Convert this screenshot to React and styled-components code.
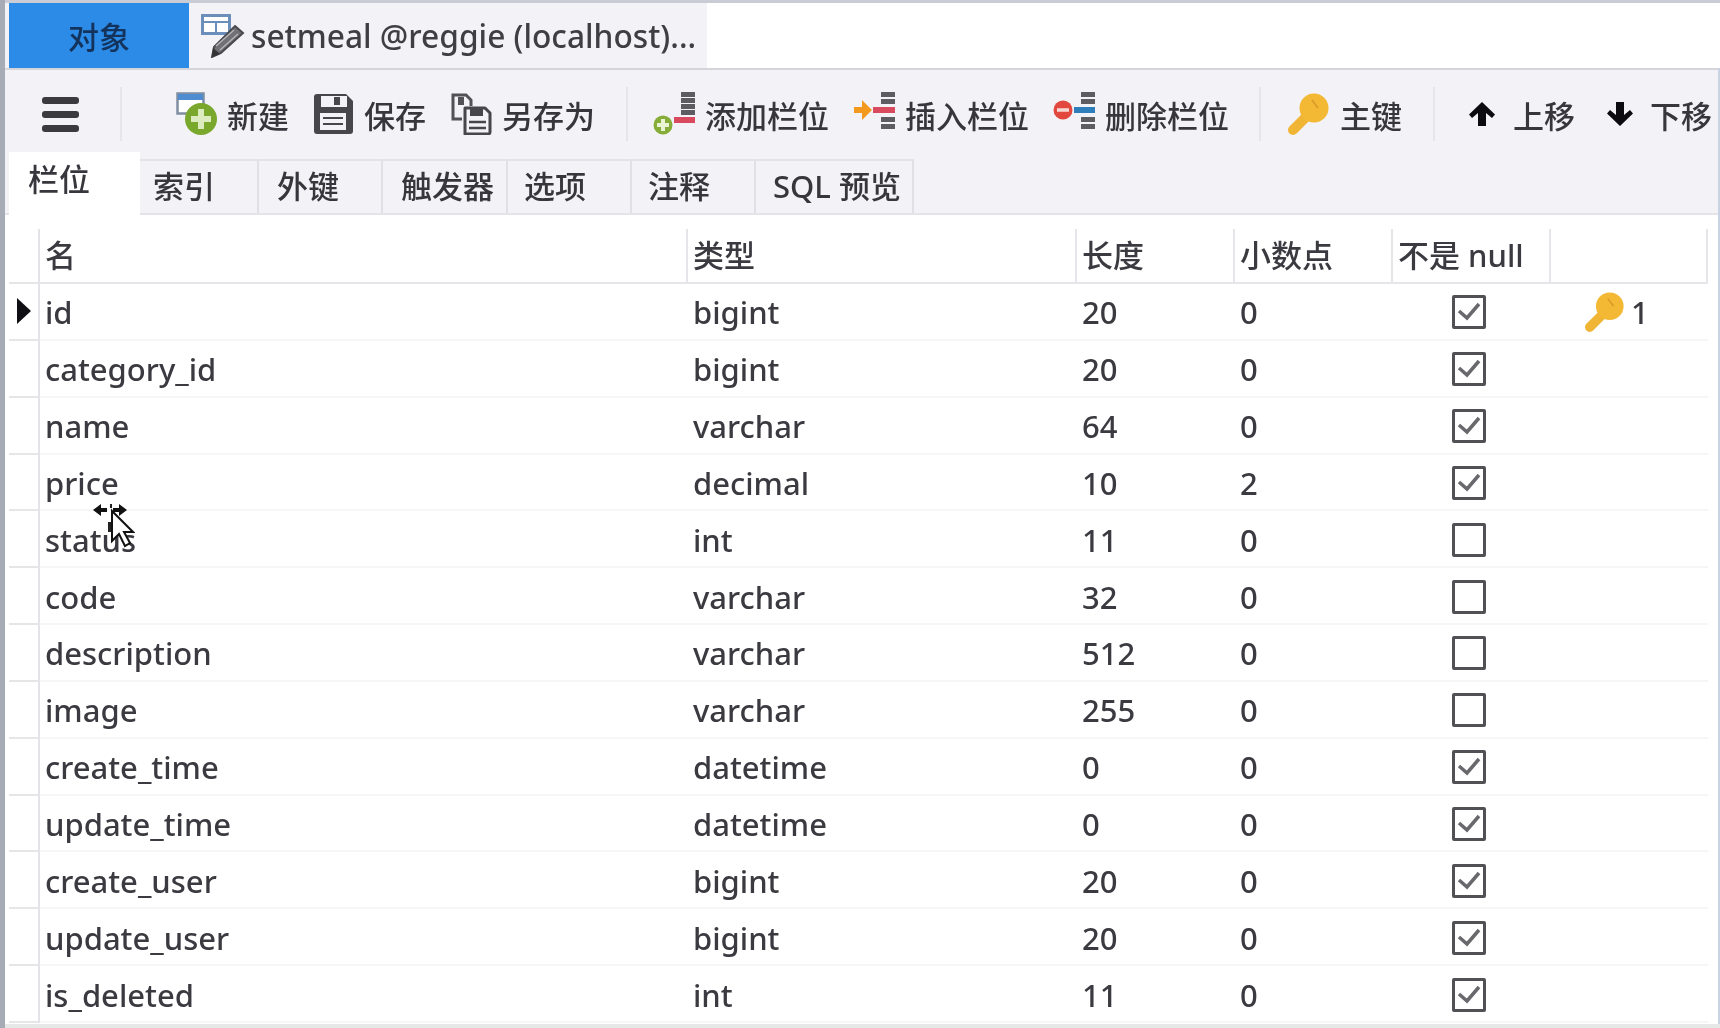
import React from 'react';
import styled, { createGlobalStyle } from 'styled-components';

const GlobalStyle = createGlobalStyle`
  html, body {
    margin: 0;
    padding: 0;
    background: #fff;
  }
  body {
    font-family: "Noto Sans", "Noto Sans CJK SC", sans-serif;
    color: #333338;
    overflow: hidden;
  }
`;

const Window = styled.div`
  position: relative;
  width: 1720px;
  height: 1028px;
  box-sizing: border-box;
  background: #fff;
  border-left: 5px solid #a6abb5;
  overflow: hidden;
  filter: blur(0.7px);
`;

const TopBar = styled.div`
  display: flex;
  height: 68px;
  padding-left: 4px;
  box-sizing: border-box;
  border-top: 3px solid #c9ccd4;
  background: linear-gradient(to right, #f3f2f7 4px, #fff 4px);
`;

const ObjectTab = styled.div`
  width: 180px;
  display: flex;
  align-items: center;
  justify-content: center;
  background: #2b8be6;
  color: #14335c;
  font-size: 31px;
  font-weight: 500;
`;

const DocTab = styled.div`
  width: 518px;
  display: flex;
  align-items: center;
  gap: 6px;
  padding-left: 12px;
  box-sizing: border-box;
  background: #f3f3f7;
  font-size: 31.7px;
  font-weight: 500;
  white-space: nowrap;
  color: #3e3e44;
`;

const Toolbar = styled.div`
  display: flex;
  align-items: center;
  height: 84px;
  padding: 6px 0 0 37px;
  background: #f3f2f7;
  border-top: 2px solid #d5d6dc;
  box-sizing: border-box;
`;

const MenuIcon = styled.div`
  width: 37px;
  display: flex;
  flex-direction: column;
  gap: 7px;
  margin-right: 41px;

  span {
    display: block;
    height: 7px;
    border-radius: 3px;
    background: #3b3b3f;
  }
`;

const Sep = styled.div`
  width: 2px;
  height: 54px;
  background: #e6e6ea;
  margin-right: ${(p) => p.$right}px;
`;

const ToolButton = styled.div`
  display: flex;
  align-items: center;
  gap: ${(p) => p.$gap ?? 10}px;
  margin-right: ${(p) => p.$after ?? 24}px;
  white-space: nowrap;

  svg {
    flex: none;
  }
`;

const ToolLabel = styled.span`
  font-size: 31px;
  font-weight: 500;
  line-height: 40px;
  padding-top: 4px;
  color: #36363c;
`;

const TabRow = styled.div`
  display: flex;
  align-items: flex-end;
  height: 63px;
  padding-left: 4px;
  background: #f3f2f7;
  border-bottom: 2px solid #e3e3e8;
  box-sizing: border-box;
`;

const Tab = styled.div`
  width: ${(p) => p.$w}px;
  height: ${(p) => (p.$active ? 63 : 54)}px;
  padding-bottom: ${(p) => (p.$active ? 12 : 6)}px;
  margin-bottom: ${(p) => (p.$active ? -2 : 0)}px;
  box-sizing: border-box;
  display: flex;
  align-items: center;
  padding-left: ${(p) => p.$pad}px;
  font-size: 31px;
  font-weight: 500;
  background: ${(p) => (p.$active ? '#fff' : '#f3f2f7')};
  border-top: ${(p) => (p.$active ? 0 : '2px solid #e3e3e8')};
  border-right: ${(p) => (p.$active ? 0 : '2px solid #e0e0e6')};
  color: #36363c;
  white-space: nowrap;
`;

const Grid = styled.div`
  display: flex;
  flex-direction: column;
  padding: 14px 0 0 4px;
`;

const Row = styled.div`
  display: grid;
  grid-template-columns: 31px 648px 389px 158px 158px 158px 157px;
  width: 1699px;
  height: ${(p) => (p.$head ? 55 : 56.85)}px;
  box-sizing: border-box;
  border-bottom: 2px solid ${(p) => (p.$head ? '#e6e6ea' : '#f6f6f8')};
`;

const Gutter = styled.div`
  display: flex;
  align-items: center;
  justify-content: center;
  box-shadow: 0 2px 0 #e6e6e8;
  border-right: 2px solid #e4e4e8;
  box-sizing: border-box;
`;

const Cell = styled.div`
  display: flex;
  align-items: center;
  padding-left: 5px;
  padding-top: 2px;
  font-size: 31px;
  font-weight: 500;
  color: #3a3a40;
  white-space: nowrap;
  box-sizing: border-box;
`;

const HeadCell = styled(Cell)`
  padding-top: 0;
  padding-bottom: 4px;
  border-right: 2px solid #e6e6ea;
`;

const CheckCell = styled(Cell)`
  justify-content: center;
  padding-left: 0;
  padding-right: 6px;
`;

const KeyCell = styled(Cell)`
  padding-left: 34px;
  gap: 6px;
`;

const Check = styled.span`
  width: 34px;
  height: 34px;
  box-sizing: border-box;
  border: 3px solid #505055;
  border-radius: 2px;
  display: flex;
  align-items: center;
  justify-content: center;
`;

const BottomLine = styled.div`
  position: absolute;
  left: 0;
  right: 0;
  bottom: 0;
  height: 4px;
  background: #e6e8e8;
`;

const Edge = styled.div`
  position: absolute;
  top: 68px;
  right: 0;
  width: 2px;
  bottom: 0;
  background: #c8d4e4;
`;

const Pointer = styled.svg`
  position: absolute;
  left: 86px;
  top: 503px;
`;

const ArrowSvg = styled.svg`
  transform: ${(p) => (p.$down ? 'scaleY(-1)' : 'none')};
`;

const columns = [
  ['id', 'bigint', '20', '0', true],
  ['category_id', 'bigint', '20', '0', true],
  ['name', 'varchar', '64', '0', true],
  ['price', 'decimal', '10', '2', true],
  ['status', 'int', '11', '0', false],
  ['code', 'varchar', '32', '0', false],
  ['description', 'varchar', '512', '0', false],
  ['image', 'varchar', '255', '0', false],
  ['create_time', 'datetime', '0', '0', true],
  ['update_time', 'datetime', '0', '0', true],
  ['create_user', 'bigint', '20', '0', true],
  ['update_user', 'bigint', '20', '0', true],
  ['is_deleted', 'int', '11', '0', true],
];

const EditTableIcon = () => (
  <svg width="44" height="44" viewBox="0 0 44 44">
    <rect x="1.5" y="1.5" width="27" height="18" fill="#fff" stroke="#6b8fba" strokeWidth="3" />
    <path d="M2 8h26M15 8v11" stroke="#6b8fba" strokeWidth="2" />
    <path d="M34 12l8 7-22 20-9 4 2-10z" fill="#707075" stroke="#4a4a4e" strokeWidth="2" />
    <path d="M15 32l18-16M19 36l18-16" stroke="#b4b4b8" strokeWidth="1.5" />
    <path d="M11 43l1-9 7 6z" fill="#333" />
  </svg>
);

const NewIcon = () => (
  <svg width="41" height="44" viewBox="0 0 41 44">
    <rect x="1.5" y="1.5" width="26" height="20" fill="#fff" stroke="#7f8ea0" strokeWidth="2.5" />
    <rect x="2" y="2" width="25" height="6" fill="#4f8dd0" />
    <circle cx="25" cy="27" r="16" fill="#79a82c" />
    <path d="M25 17v20M15 27h20" stroke="#dcecc0" strokeWidth="6" />
  </svg>
);

const SaveIcon = () => (
  <svg width="41" height="42" viewBox="0 0 41 42">
    <path d="M1 4a3 3 0 0 1 3-3h29l7 7v30a3 3 0 0 1-3 3H4a3 3 0 0 1-3-3z" fill="#47474b" />
    <rect x="8" y="3" width="26" height="11" fill="#f3f2f7" />
    <rect x="21" y="4" width="6" height="8" fill="#47474b" />
    <rect x="7" y="20" width="26" height="17" fill="#f3f2f7" />
    <path d="M10 25h20M10 31h20" stroke="#47474b" strokeWidth="2" />
  </svg>
);

const SaveAsIcon = () => (
  <svg width="42" height="42" viewBox="0 0 42 42">
    <path d="M12 26H3V2h13l5 5v6" fill="#f3f2f7" stroke="#515156" strokeWidth="3" />
    <path d="M8 4v8h6V4" fill="#515156" />
    <path d="M15 15h20l5 5v19a2 2 0 0 1-2 2H15z" fill="#f3f2f7" stroke="#47474b" strokeWidth="3" strokeLinejoin="round" />
    <path d="M20 16h13v7H20z" fill="#47474b" />
    <path d="M19 29h17M19 35h17" stroke="#47474b" strokeWidth="2.5" />
  </svg>
);

const FieldBars = ({ rows }) => (
  <g>
    {rows.map((y) => (
      <rect key={y} x="28" y={y} width="14" height="5" fill="#5c5c61" />
    ))}
  </g>
);

const AddFieldIcon = () => (
  <svg width="42" height="46" viewBox="0 0 42 46">
    <FieldBars rows={[1, 7, 13, 19]} />
    <rect x="21" y="26" width="21" height="6" fill="#d94a5e" />
    <circle cx="10" cy="34" r="9.5" fill="#86ad38" />
    <path d="M10 28v12M4 34h12" stroke="#eaf3d4" strokeWidth="4" />
  </svg>
);

const InsertFieldIcon = () => (
  <svg width="42" height="46" viewBox="0 0 42 46">
    <FieldBars rows={[1, 8, 26, 33]} />
    <rect x="20" y="16" width="22" height="6" fill="#d94a5e" />
    <path d="M1 16h8V9l10 10-10 10v-7H1z" fill="#f39a1e" />
  </svg>
);

const DeleteFieldIcon = () => (
  <svg width="42" height="46" viewBox="0 0 42 46">
    <FieldBars rows={[1, 8, 26, 33]} />
    <rect x="21" y="16" width="21" height="6" fill="#2f7ebc" />
    <circle cx="10" cy="19" r="9.5" fill="#e2483e" />
    <path d="M4 19h12" stroke="#f6d8d4" strokeWidth="3.5" />
  </svg>
);

const KeyIcon = ({ size = 42 }) => (
  <svg width={size} height={size} viewBox="0 0 42 42">
    <path d="M21 21L5 37" stroke="#f0b535" strokeWidth="10" strokeLinecap="round" />
    <circle cx="26" cy="15" r="14.5" fill="#f3b834" />
    <path d="M24 7l6 8" stroke="#d8982a" strokeWidth="1.5" />
  </svg>
);

const ArrowIcon = ({ down }) => (
  <ArrowSvg $down={down} width="28" height="26" viewBox="0 0 28 26">
    <path d="M14 1L1 13.5 4 17l6-5v13h8V12l6 5 3-3.5z" fill="#0c0c10" />
  </ArrowSvg>
);

const CheckBox = ({ on }) => (
  <Check>
    {on && (
      <svg width="26" height="22" viewBox="0 0 26 22">
        <path d="M3 10l8 7L23 3" fill="none" stroke="#68686d" strokeWidth="3.5" />
      </svg>
    )}
  </Check>
);

const tabs = [
  ['栏位', 131, 19],
  ['索引', 119, 13],
  ['外键', 124, 18],
  ['触发器', 125, 18],
  ['选项', 124, 16],
  ['注释', 124, 16],
  ['SQL 预览', 158, 17],
];

export default function App() {
  return (
    <Window>
      <GlobalStyle />
      <TopBar>
        <ObjectTab>对象</ObjectTab>
        <DocTab>
          <EditTableIcon />
          setmeal @reggie (localhost)...
        </DocTab>
      </TopBar>
      <Toolbar>
        <MenuIcon>
          <span />
          <span />
          <span />
        </MenuIcon>
        <Sep $right={54} />
        <ToolButton><NewIcon /><ToolLabel>新建</ToolLabel></ToolButton>
        <ToolButton><SaveIcon /><ToolLabel>保存</ToolLabel></ToolButton>
        <ToolButton $after={31}><SaveAsIcon /><ToolLabel>另存为</ToolLabel></ToolButton>
        <Sep $right={25} />
        <ToolButton><AddFieldIcon /><ToolLabel>添加栏位</ToolLabel></ToolButton>
        <ToolButton><InsertFieldIcon /><ToolLabel>插入栏位</ToolLabel></ToolButton>
        <ToolButton $after={30}><DeleteFieldIcon /><ToolLabel>删除栏位</ToolLabel></ToolButton>
        <Sep $right={27} />
        <ToolButton $after={31}><KeyIcon /><ToolLabel>主键</ToolLabel></ToolButton>
        <Sep $right={33} />
        <ToolButton $gap={17} $after={31}><ArrowIcon /><ToolLabel>上移</ToolLabel></ToolButton>
        <ToolButton $gap={16} $after={0}><ArrowIcon down /><ToolLabel>下移</ToolLabel></ToolButton>
      </Toolbar>
      <TabRow>
        {tabs.map(([label, w, pad], i) => (
          <Tab key={label} $w={w} $pad={pad} $active={i === 0}>{label}</Tab>
        ))}
      </TabRow>
      <Grid>
        <Row $head>
          <Gutter />
          <HeadCell>名</HeadCell>
          <HeadCell>类型</HeadCell>
          <HeadCell>长度</HeadCell>
          <HeadCell>小数点</HeadCell>
          <HeadCell>不是 null</HeadCell>
          <HeadCell />
        </Row>
        {columns.map(([name, type, len, dec, notNull], i) => (
          <Row key={name}>
            <Gutter>
              {i === 0 && (
                <svg width="14" height="26" viewBox="0 0 14 26">
                  <path d="M0 0l14 13L0 26z" fill="#101014" />
                </svg>
              )}
            </Gutter>
            <Cell>{name}</Cell>
            <Cell>{type}</Cell>
            <Cell>{len}</Cell>
            <Cell>{dec}</Cell>
            <CheckCell><CheckBox on={notNull} /></CheckCell>
            {i === 0 ? (
              <KeyCell><KeyIcon size={40} />1</KeyCell>
            ) : (
              <Cell />
            )}
          </Row>
        ))}
      </Grid>
      <Pointer width="44" height="52" viewBox="0 0 44 52">
        <path d="M2 7l8-6v4h6v4h-6v4zM36 7l-8-6v4h-6v4h6v4z" fill="#111" />
        <path d="M19 1h2v4h-2zM17 19h3v10h-3z" fill="#222" />
        <path d="M21 8v30l7-7 6 12 5-3-6-11h9z" fill="#fff" stroke="#111" strokeWidth="2" />
      </Pointer>
      <Edge />
      <BottomLine />
    </Window>
  );
}
